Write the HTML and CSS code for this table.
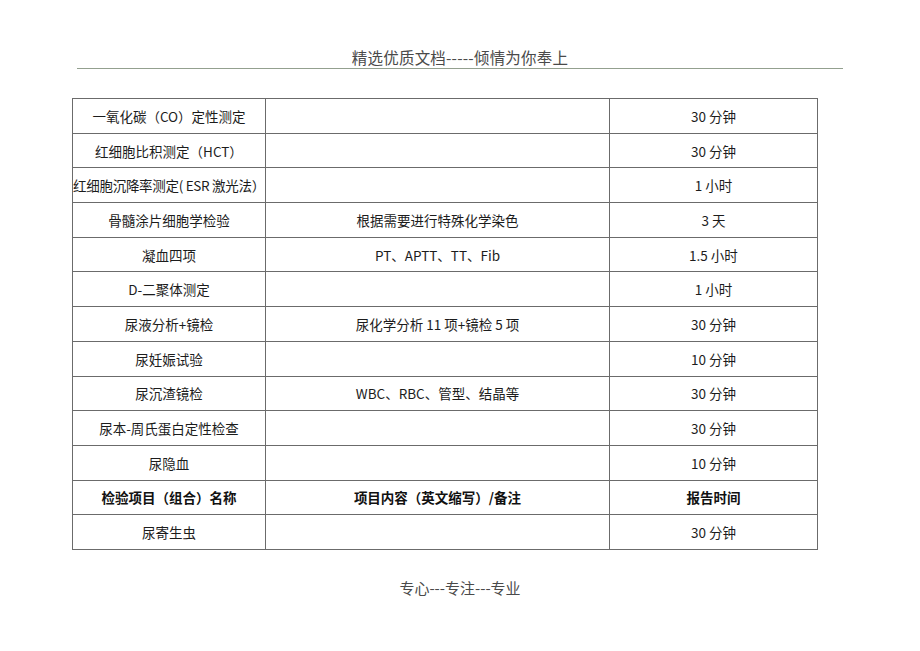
FILE: index.html
```html
<!DOCTYPE html>
<html lang="zh">
<head>
<meta charset="utf-8">
<title>检验项目报告时间</title>
<link rel="stylesheet" href="styles.css">
</head>
<body>
<div class="page">
  <header class="doc-header">
    <div class="doc-title">精选优质文档-----倾情为你奉上</div>
    <div class="doc-rule"></div>
  </header>
  <table class="items">
    <colgroup>
      <col class="c1"><col class="c2"><col class="c3">
    </colgroup>
    <tbody>
      <tr><td>一氧化碳（CO）定性测定</td><td></td><td>30 分钟</td></tr>
      <tr><td>红细胞比积测定（HCT）</td><td></td><td>30 分钟</td></tr>
      <tr><td class="tight">红细胞沉降率测定( ESR 激光法）</td><td></td><td>1 小时</td></tr>
      <tr><td>骨髓涂片细胞学检验</td><td>根据需要进行特殊化学染色</td><td>3 天</td></tr>
      <tr><td>凝血四项</td><td>PT、APTT、TT、Fib</td><td>1.5 小时</td></tr>
      <tr><td>D-二聚体测定</td><td></td><td>1 小时</td></tr>
      <tr><td>尿液分析+镜检</td><td>尿化学分析 11 项+镜检 5 项</td><td>30 分钟</td></tr>
      <tr><td>尿妊娠试验</td><td></td><td>10 分钟</td></tr>
      <tr><td>尿沉渣镜检</td><td>WBC、RBC、管型、结晶等</td><td>30 分钟</td></tr>
      <tr><td>尿本-周氏蛋白定性检查</td><td></td><td>30 分钟</td></tr>
      <tr><td>尿隐血</td><td></td><td>10 分钟</td></tr>
      <tr class="head"><td>检验项目（组合）名称</td><td>项目内容（英文缩写）/备注</td><td>报告时间</td></tr>
      <tr><td>尿寄生虫</td><td></td><td>30 分钟</td></tr>
    </tbody>
  </table>
  <footer class="doc-footer">专心---专注---专业</footer>
</div>
</body>
</html>
```

FILE: styles.css
```css
html, body {
  margin: 0;
  padding: 0;
  background: #ffffff;
}

body {
  font-family: "Noto Sans CJK SC", "Noto Sans", sans-serif;
  color: #1a1a1a;
}

.page {
  width: 920px;
  height: 651px;
  position: relative;
  overflow: hidden;
}

.doc-header {
  padding-top: 46px;
}

.doc-title {
  text-align: center;
  font-size: 15.5px;
  line-height: 22px;
  color: #4a4a4a;
  padding-left: 0;
  margin-left: 0;
  width: 920px;
  letter-spacing: 0.2px;
}

.doc-rule {
  margin: 0 0 0 77px;
  width: 766px;
  height: 1px;
  background: #93a08f;
}

.items {
  margin: 29px 0 0 72px;
  border-collapse: collapse;
  table-layout: fixed;
  width: 745px;
}

.c1 { width: 193px; }
.c2 { width: 344px; }
.c3 { width: 208px; }

.items td {
  border: 1px solid #6b6b6b;
  height: 33.7px;
  padding: 0;
  text-align: center;
  vertical-align: middle;
  font-size: 13.5px;
  line-height: 18px;
  white-space: nowrap;
  color: #1c1c1c;
}

.items td.tight {
  letter-spacing: -0.3px;
}

.items tr.head td {
  font-weight: bold;
  color: #111;
}

.doc-footer {
  text-align: center;
  margin-top: 28px;
  font-size: 15px;
  line-height: 20px;
  color: #4a4a4a;
  padding-left: 0;
}
```
